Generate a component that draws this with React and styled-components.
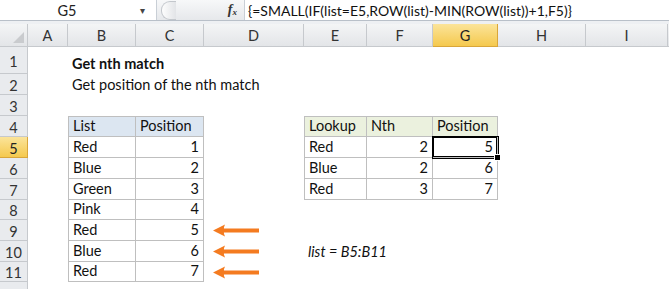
import React from 'react';
import styled, { createGlobalStyle, css } from 'styled-components';

const COLS = ['A', 'B', 'C', 'D', 'E', 'F', 'G', 'H', 'I', 'J'];
const COL_WIDTHS = '28px 40px 68px 68px 100px 63px 66px 65px 88px 82px 1fr';
const ROW_HEIGHTS = [27, 21, 21, 21, 21, 21, 21, 20, 21, 21, 20, 21];
const LAST_LABELLED_ROW = 11;

const ACTIVE_COL = 'G';
const ACTIVE_ROW = 5;

const FORMULA = '{=SMALL(IF(list=E5,ROW(list)-MIN(ROW(list))+1,F5)}';

// bordered tables with a filled header row
const TABLES = [
  { cols: ['B', 'C'], rows: [4, 11], fill: '#dce6f1' },
  { cols: ['E', 'F', 'G'], rows: [4, 7], fill: '#ebf1de' },
];

const CELLS = {
  B1: { text: 'Get nth match', bold: true },
  B2: { text: 'Get position of the nth match' },
  B4: { text: 'List' },
  C4: { text: 'Position' },
  B5: { text: 'Red' }, C5: { text: '1', num: true },
  B6: { text: 'Blue' }, C6: { text: '2', num: true },
  B7: { text: 'Green' }, C7: { text: '3', num: true },
  B8: { text: 'Pink' }, C8: { text: '4', num: true },
  B9: { text: 'Red' }, C9: { text: '5', num: true },
  B10: { text: 'Blue' }, C10: { text: '6', num: true },
  B11: { text: 'Red' }, C11: { text: '7', num: true },
  D9: { arrow: true }, D10: { arrow: true }, D11: { arrow: true },
  E4: { text: 'Lookup' }, F4: { text: 'Nth' }, G4: { text: 'Position' },
  E5: { text: 'Red' }, F5: { text: '2', num: true }, G5: { text: '5', num: true },
  E6: { text: 'Blue' }, F6: { text: '2', num: true }, G6: { text: '6', num: true },
  E7: { text: 'Red' }, F7: { text: '3', num: true }, G7: { text: '7', num: true },
  E10: { text: 'list = B5:B11', italic: true },
};

const tableFor = (col, row) =>
  TABLES.find(t => t.cols.includes(col) && row >= t.rows[0] && row <= t.rows[1]);

const Arrow = () => (
  <svg width="46" height="13" viewBox="0 0 46 13">
    <path d="M0 6.5 L12 0.5 Q10.5 4 11 4.5 L46 4.5 L46 8.5 L11 8.5 Q10.5 9 12 12.5 Z" fill="#f47b20" />
  </svg>
);

const App = () => {
  const cells = [];
  ROW_HEIGHTS.forEach((_, i) => {
    const row = i + 1;
    cells.push(
      <RowHead key={`r${row}`} $active={row === ACTIVE_ROW}>
        {row <= LAST_LABELLED_ROW ? row : ''}
      </RowHead>
    );
    COLS.forEach(col => {
      const id = `${col}${row}`;
      const data = CELLS[id] || {};
      const table = tableFor(col, row);
      cells.push(
        <Cell
          key={id}
          $boxed={!!table}
          $left={table && table.cols[0] === col}
          $top={table && table.rows[0] === row}
          $fill={table && table.rows[0] === row ? table.fill : null}
          $num={data.num}
          $bold={data.bold}
          $italic={data.italic}
          $center={data.arrow}
          $selected={col === ACTIVE_COL && row === ACTIVE_ROW}
        >
          {data.arrow ? <Arrow /> : data.text}
        </Cell>
      );
    });
  });

  return (
    <>
      <GlobalStyle />
      <Window>
        <FormulaBar>
          <NameBox>
            <NameText>G5</NameText>
            <Caret>▾</Caret>
          </NameBox>
          <Splitter>
            <Grip />
            <Fx>
              f<sub>x</sub>
            </Fx>
          </Splitter>
          <FormulaInput>{FORMULA}</FormulaInput>
        </FormulaBar>
        <Strip />
        <Sheet $rows={ROW_HEIGHTS}>
          <Corner />
          {COLS.map(col => (
            <ColHead key={col} $active={col === ACTIVE_COL}>{col === 'J' ? '' : col}</ColHead>
          ))}
          {cells}
        </Sheet>
      </Window>
    </>
  );
};

export default App;

// --- STYLES ---

const GlobalStyle = createGlobalStyle`
  html, body { margin: 0; padding: 0; background: #fff; overflow: hidden; }
  body { font-family: Lato, 'Open Sans', sans-serif; }
`;

const Window = styled.div`
  width: 669px;
  height: 289px;
  overflow: hidden;
  display: flex;
  flex-direction: column;
  background: #fff;
`;

const FormulaBar = styled.div`
  display: flex;
  height: 21px;
  border-bottom: 1px solid #b9c0c9;
  box-sizing: border-box;
  flex-shrink: 0;
`;

const NameBox = styled.div`
  width: 157px;
  display: flex;
  align-items: center;
  border-right: 1px solid #c9cfd6;
  box-sizing: border-box;
`;

const NameText = styled.span`
  flex: 1;
  text-align: center;
  font-size: 14.5px;
  color: #222;
  padding-right: 6px;
`;

const Caret = styled.span`
  width: 14px;
  font-size: 10px;
  color: #444;
  margin-right: 2px;
`;

const Splitter = styled.div`
  width: 88px;
  display: flex;
  align-items: center;
  justify-content: space-between;
  background: linear-gradient(#f7f8f9, #e6e8eb);
  border-right: 1px solid #c9cfd6;
  box-sizing: border-box;
  padding: 0 7px 0 4px;
`;

const Grip = styled.div`
  width: 14px;
  height: 17px;
  border-radius: 9px 0 0 9px;
  border: 1px solid #c3c7cc;
  border-right: none;
  background: linear-gradient(90deg, #fdfdfd, #e2e4e7);
`;

const Fx = styled.span`
  font-family: 'Liberation Serif', serif;
  font-style: italic;
  font-weight: bold;
  font-size: 14px;
  color: #333;
  sub { font-size: 9px; vertical-align: -1px; }
`;

const FormulaInput = styled.div`
  flex: 1;
  display: flex;
  align-items: center;
  padding-left: 3px;
  font-size: 14px;
  color: #111;
  white-space: nowrap;
`;

const Strip = styled.div`
  height: 3px;
  background: #eef0f3;
  flex-shrink: 0;
`;

const Sheet = styled.div`
  display: grid;
  grid-template-columns: ${COL_WIDTHS};
  grid-template-rows: 23px ${p => p.$rows.map(h => `${h}px`).join(' ')};
  flex: 1;
`;

const headBase = css`
  box-sizing: border-box;
  display: flex;
  align-items: center;
  justify-content: center;
  font-size: 14.5px;
  color: #333;
  border-right: 1px solid #c6c9cd;
  border-bottom: 1px solid #c6c9cd;
  background: linear-gradient(#f4f5f6, #e3e5e8);
`;

const activeHead = css`
  background: linear-gradient(#fbe49a, #f5c94e);
  border-color: #d9a63a;
  color: #222;
`;

const Corner = styled.div`
  ${headBase};
  position: relative;
  &::after {
    content: '';
    position: absolute;
    right: 3px;
    bottom: 3px;
    border-left: 11px solid transparent;
    border-bottom: 11px solid #c9cbce;
  }
`;

const ColHead = styled.div`
  ${headBase};
  ${p => p.$active && activeHead};
`;

const RowHead = styled.div`
  ${headBase};
  background: #e9ebee;
  padding-top: 2px;
  ${p => p.$active && activeHead};
`;

const Cell = styled.div`
  box-sizing: border-box;
  position: relative;
  display: flex;
  align-items: ${p => (p.$center ? 'center' : 'flex-end')};
  justify-content: ${p => (p.$num ? 'flex-end' : 'flex-start')};
  padding: ${p => (p.$center ? '0 0 0 9px' : '0 4px 1px 4px')};
  font-size: 14.5px;
  line-height: 18px;
  color: #111;
  white-space: nowrap;
  overflow: visible;
  font-weight: ${p => (p.$bold ? 700 : 400)};
  font-style: ${p => (p.$italic ? 'italic' : 'normal')};
  background: ${p => p.$fill || 'transparent'};
  z-index: ${p => (p.$selected ? 2 : 0)};

  ${p => p.$boxed && css`
    border-right: 1px solid #bfbfbf;
    border-bottom: 1px solid #bfbfbf;
  `}
  ${p => p.$left && css`border-left: 1px solid #bfbfbf;`}
  ${p => p.$top && css`border-top: 1px solid #bfbfbf;`}

  ${p => p.$selected && css`
    box-shadow: 0 0 0 1px #000, inset 0 0 0 1px #000;
    &::after {
      content: '';
      position: absolute;
      right: -4px;
      bottom: -4px;
      width: 5px;
      height: 5px;
      background: #000;
      border: 1px solid #fff;
    }
  `}
`;
